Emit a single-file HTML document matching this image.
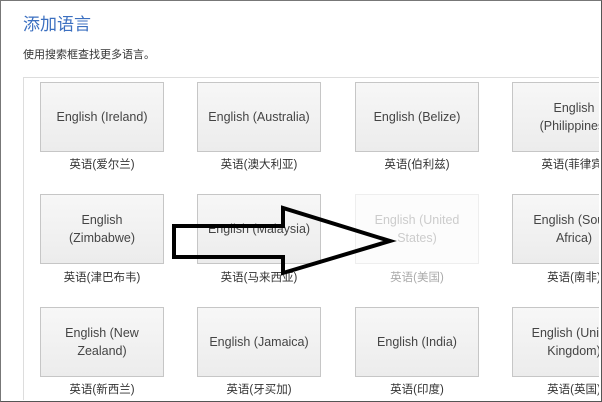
<!DOCTYPE html>
<html><head><style>
html,body{margin:0;width:602px;height:402px;overflow:hidden}
body{background:#fff;font-family:"Liberation Sans","Noto Sans CJK SC",sans-serif;position:relative}
.frame{position:absolute;left:0;top:0;width:600px;height:400px;border:1px solid #777;border-right-color:#555;border-bottom-color:#555;box-sizing:border-box;width:602px;height:402px}
.h{position:absolute;left:23px;top:10px;font-size:17px;color:#3b6fc0}
.s{position:absolute;left:23px;top:46px;font-size:11px;color:#333}
.box{position:absolute;left:23px;top:77px;width:590px;height:330px;border:1px solid #ddd}
.clip{position:absolute;left:0;top:0;width:599px;height:400px;overflow:hidden}
.t{position:absolute;width:122px;height:68px;border:1px solid #c6c6c6;background:linear-gradient(#f7f7f7,#ececec);display:flex;align-items:center;justify-content:center;text-align:center;font-size:12.5px;color:#444;line-height:18px}
.t.d{background:#fcfcfc;border-color:#eee;color:#ccc}
.l{position:absolute;width:124px;text-align:center;font-size:11.5px;color:#333;line-height:14px}
.l.d{color:#aaa}
</style></head><body>
<div class="h">添加语言</div>
<div class="s">使用搜索框查找更多语言。</div>
<div class="clip">
<div class="box"></div>
<div class="t" style="left:40px;top:82px">English (Ireland)</div>
<div class="t" style="left:197px;top:82px">English (Australia)</div>
<div class="t" style="left:355px;top:82px">English (Belize)</div>
<div class="t" style="left:512px;top:82px">English<br>(Philippines)</div>
<div class="l" style="left:40px;top:158px">英语(爱尔兰)</div>
<div class="l" style="left:197px;top:158px">英语(澳大利亚)</div>
<div class="l" style="left:355px;top:158px">英语(伯利兹)</div>
<div class="l" style="left:512px;top:158px">英语(菲律宾)</div>
<div class="t" style="left:40px;top:194px">English<br>(Zimbabwe)</div>
<div class="t" style="left:197px;top:194px">English (Malaysia)</div>
<div class="t d" style="left:355px;top:194px">English (United<br>States)</div>
<div class="t" style="left:512px;top:194px">English (South<br>Africa)</div>
<div class="l" style="left:40px;top:271px">英语(津巴布韦)</div>
<div class="l" style="left:197px;top:271px">英语(马来西亚)</div>
<div class="l d" style="left:355px;top:271px">英语(美国)</div>
<div class="l" style="left:512px;top:271px">英语(南非)</div>
<div class="t" style="left:40px;top:307px">English (New<br>Zealand)</div>
<div class="t" style="left:197px;top:307px">English (Jamaica)</div>
<div class="t" style="left:355px;top:307px">English (India)</div>
<div class="t" style="left:512px;top:307px">English (United<br>Kingdom)</div>
<div class="l" style="left:40px;top:383px">英语(新西兰)</div>
<div class="l" style="left:197px;top:383px">英语(牙买加)</div>
<div class="l" style="left:355px;top:383px">英语(印度)</div>
<div class="l" style="left:512px;top:383px">英语(英国)</div>
</div>
<div class="frame"></div>
<svg style="position:absolute;left:0;top:0" width="602" height="402">
<path d="M174 226 H283 V208 L390 241 L283 273 V257 H174 Z" fill="none" stroke="#000" stroke-width="4" stroke-linejoin="miter"/>
</svg>
</body></html>
